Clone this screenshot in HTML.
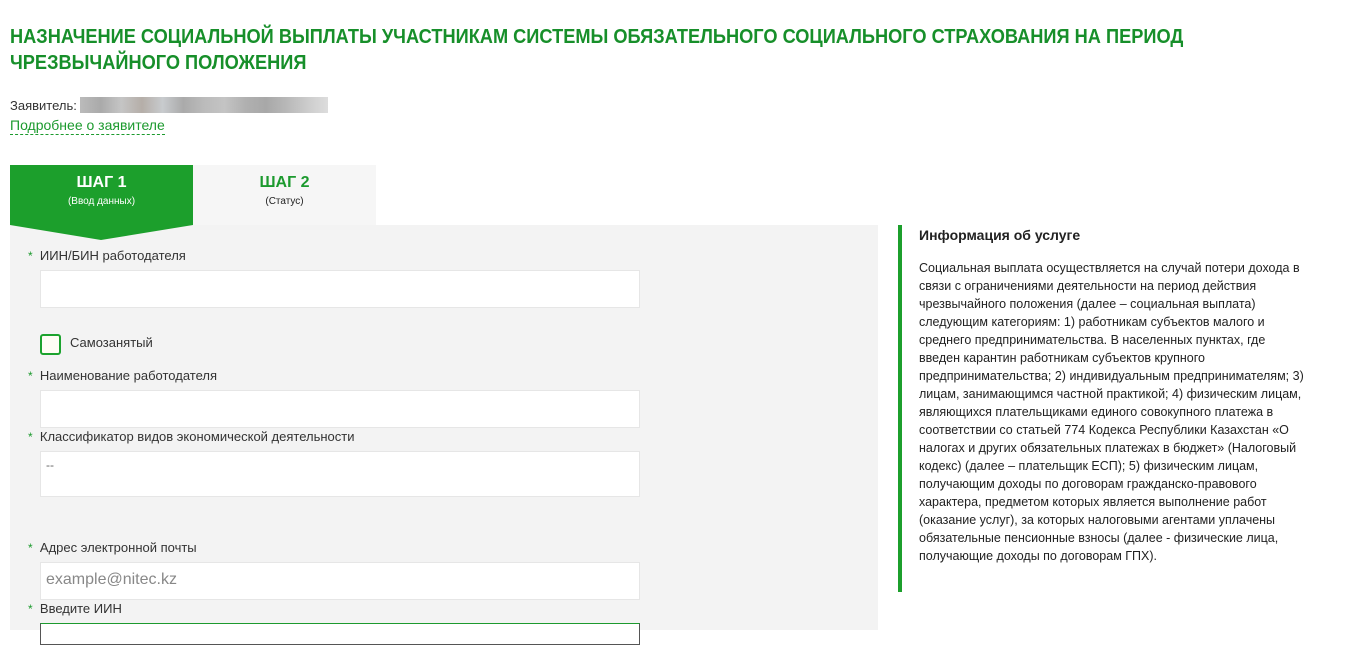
<!DOCTYPE html>
<html><head><meta charset="utf-8"><style>
body{margin:0;width:1348px;height:630px;overflow:hidden;background:#fff;font-family:"Liberation Sans",sans-serif;color:#222;position:relative}
.a{position:absolute}
.h{position:absolute;left:10px;margin:0;font-size:20px;line-height:26px;color:#178f2a;font-weight:bold;white-space:nowrap;transform-origin:0 0;transform:scaleX(0.91)}
.lbl{font-size:13px;color:#333}
.star{color:#1c9a2e;font-size:12px}
.inp{position:absolute;left:40px;width:598px;background:#fff;border:1px solid #e6e6e6}
.info{position:absolute;left:919px;top:259px;font-size:12.5px;line-height:18px;color:#222}
</style></head><body>
<div class="h" style="top:24px">НАЗНАЧЕНИЕ СОЦИАЛЬНОЙ ВЫПЛАТЫ УЧАСТНИКАМ СИСТЕМЫ ОБЯЗАТЕЛЬНОГО СОЦИАЛЬНОГО СТРАХОВАНИЯ НА ПЕРИОД</div>
<div class="h" style="top:50px">ЧРЕЗВЫЧАЙНОГО ПОЛОЖЕНИЯ</div>
<div class="a lbl" style="left:10px;top:98px">Заявитель:</div>
<div class="a" style="left:80px;top:97px;width:248px;height:16px;background:linear-gradient(90deg,#bbb,#aaa,#c5c5c5,#b5aea8,#c8cbce,#aaa,#bbb,#c4c4c4,#b0b0b0,#a8a8a8,#b8b8b8,#ccc,#ddd)"></div>
<div class="a" style="left:10px;top:117px;font-size:14px;color:#1c9a2e;border-bottom:1px dashed #1c9a2e;line-height:17px">Подробнее о заявителе</div>
<div class="a" style="left:10px;top:225px;width:868px;height:405px;background:#f3f3f3"></div>
<div class="a" style="left:193px;top:165px;width:183px;height:60px;background:#f6f6f6"></div>
<svg class="a" style="left:10px;top:165px" width="183" height="76"><polygon points="0,0 183,0 183,60 91,75 0,60" fill="#1c9f2c"/></svg>
<div class="a" style="left:10px;top:174px;width:183px;text-align:center;color:#fff;font-weight:bold;font-size:16px">ШАГ 1</div>
<div class="a" style="left:10px;top:196px;width:183px;text-align:center;color:#fff;font-size:10px">(Ввод данных)</div>
<div class="a" style="left:193px;top:174px;width:183px;text-align:center;color:#1c9a2e;font-weight:bold;font-size:16px">ШАГ 2</div>
<div class="a" style="left:193px;top:196px;width:183px;text-align:center;color:#222;font-size:10px">(Статус)</div>

<div class="a lbl" style="left:28px;top:248px"><span class="star">*</span>&nbsp; ИИН/БИН работодателя</div>
<div class="inp" style="top:270px;height:36px"></div>
<div class="a" style="left:40px;top:334px;width:17px;height:17px;border:2px solid #1ca32e;border-radius:3px;background:#fffef5"></div>
<div class="a lbl" style="left:70px;top:335px">Самозанятый</div>
<div class="a lbl" style="left:28px;top:368px"><span class="star">*</span>&nbsp; Наименование работодателя</div>
<div class="inp" style="top:390px;height:36px"></div>
<div class="a lbl" style="left:28px;top:429px"><span class="star">*</span>&nbsp; Классификатор видов экономической деятельности</div>
<div class="inp" style="top:451px;height:44px"></div>
<div class="a" style="left:46px;top:458px;font-size:12px;color:#666">--</div>
<div class="a lbl" style="left:28px;top:540px"><span class="star">*</span>&nbsp; Адрес электронной почты</div>
<div class="inp" style="top:562px;height:36px"></div>
<div class="a" style="left:46px;top:571px;font-size:16px;color:#888">example@nitec.kz</div>
<div class="a lbl" style="left:28px;top:601px"><span class="star">*</span>&nbsp; Введите ИИН</div>
<div class="inp" style="top:623px;height:20px;border-color:#1c9a2e #555 #555 #555"></div>

<div class="a" style="left:898px;top:225px;width:4px;height:367px;background:#1c9f2c"></div>
<div class="a" style="left:919px;top:227px;font-size:14px;font-weight:bold;color:#222">Информация об услуге</div>
<div class="info">Социальная выплата осуществляется на случай потери дохода в<br>связи с ограничениями деятельности на период действия<br>чрезвычайного положения (далее – социальная выплата)<br>следующим категориям: 1) работникам субъектов малого и<br>среднего предпринимательства. В населенных пунктах, где<br>введен карантин работникам субъектов крупного<br>предпринимательства; 2) индивидуальным предпринимателям; 3)<br>лицам, занимающимся частной практикой; 4) физическим лицам,<br>являющихся плательщиками единого совокупного платежа в<br>соответствии со статьей 774 Кодекса Республики Казахстан «О<br>налогах и других обязательных платежах в бюджет» (Налоговый<br>кодекс) (далее – плательщик ЕСП); 5) физическим лицам,<br>получающим доходы по договорам гражданско-правового<br>характера, предметом которых является выполнение работ<br>(оказание услуг), за которых налоговыми агентами уплачены<br>обязательные пенсионные взносы (далее - физические лица,<br>получающие доходы по договорам ГПХ).</div>
</body></html>
